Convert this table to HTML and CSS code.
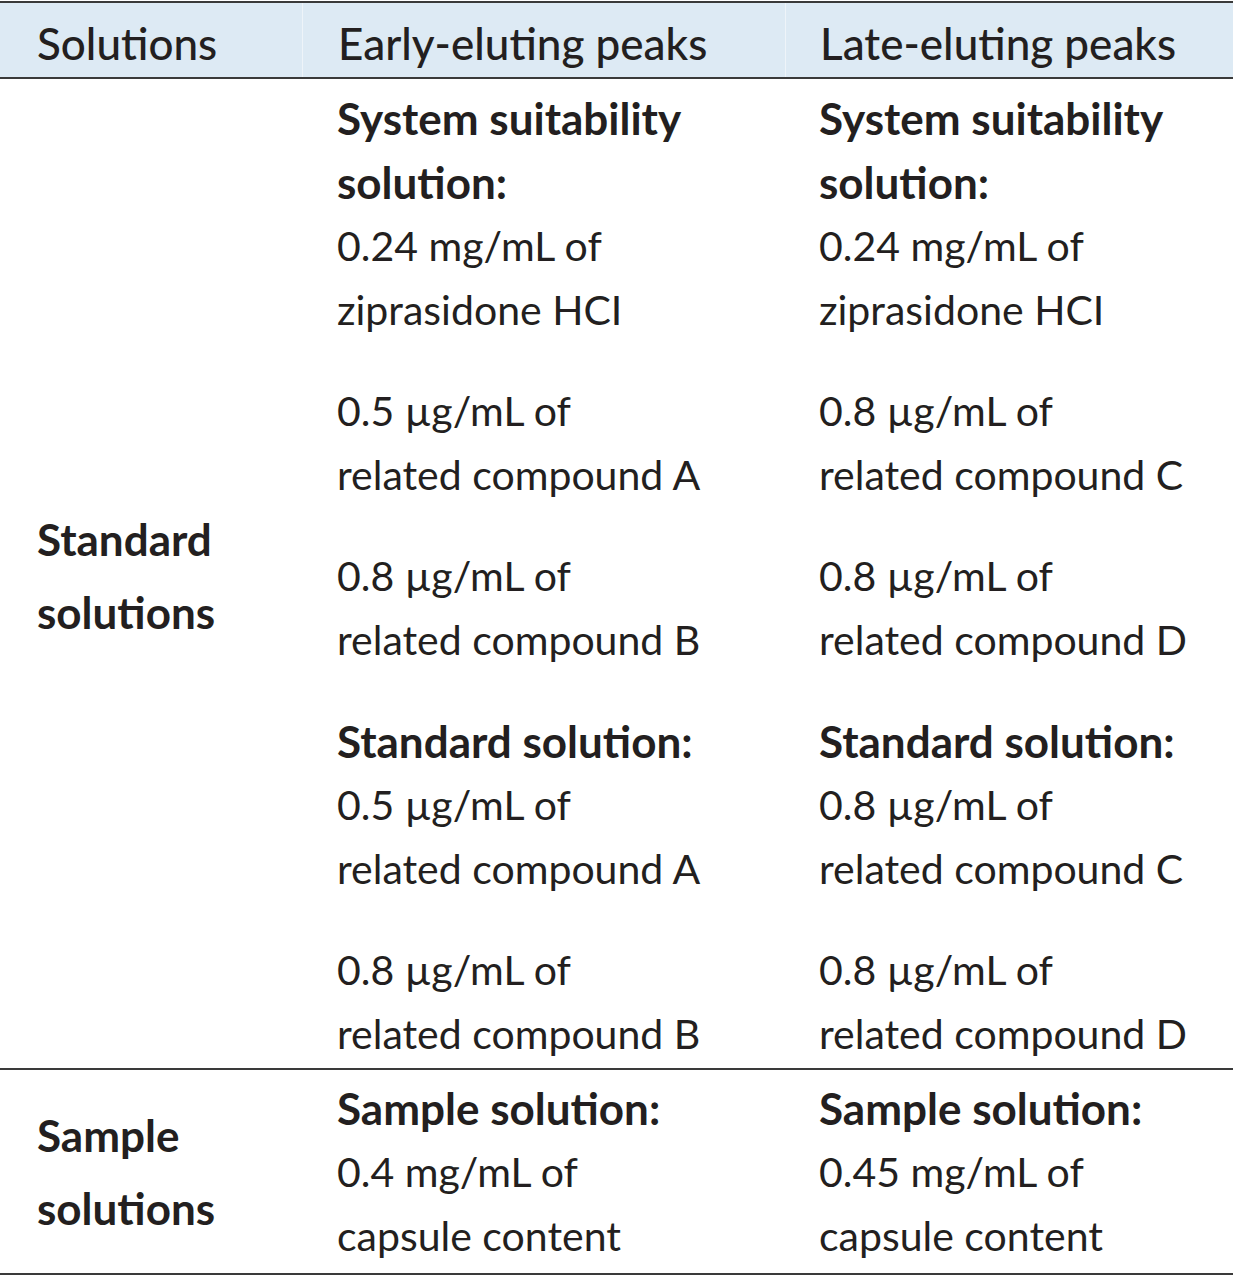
FILE: index.html
```html
<!DOCTYPE html>
<html>
<head>
<meta charset="utf-8">
<link rel="stylesheet" href="styles.css">
</head>
<body>
<div class="table">
  <div class="row head">
    <div class="cell c1">Solutions</div>
    <div class="cell c2">Early-eluting peaks</div>
    <div class="cell c3">Late-eluting peaks</div>
  </div>
  <div class="row body std">
    <div class="cell c1 label">Standard<br>solutions</div>
    <div class="cell c2">
      <p class="block"><b>System suitability<br>solution:</b>0.24 mg/mL of<br>ziprasidone HCI</p>
      <p class="block">0.5 µg/mL of<br>related compound A</p>
      <p class="block">0.8 µg/mL of<br>related compound B</p>
      <p class="block"><b>Standard solution:</b>0.5 µg/mL of<br>related compound A</p>
      <p class="block">0.8 µg/mL of<br>related compound B</p>
    </div>
    <div class="cell c3">
      <p class="block"><b>System suitability<br>solution:</b>0.24 mg/mL of<br>ziprasidone HCI</p>
      <p class="block">0.8 µg/mL of<br>related compound C</p>
      <p class="block">0.8 µg/mL of<br>related compound D</p>
      <p class="block"><b>Standard solution:</b>0.8 µg/mL of<br>related compound C</p>
      <p class="block">0.8 µg/mL of<br>related compound D</p>
    </div>
  </div>
  <div class="row body sample">
    <div class="cell c1 label">Sample<br>solutions</div>
    <div class="cell c2">
      <p class="block"><b>Sample solution:</b>0.4 mg/mL of<br>capsule content</p>
    </div>
    <div class="cell c3">
      <p class="block"><b>Sample solution:</b>0.45 mg/mL of<br>capsule content</p>
    </div>
  </div>
</div>
</body>
</html>
```

FILE: styles.css
```css
html, body {
  margin: 0;
  padding: 0;
  background: #ffffff;
}

body {
  font-family: "Lato", "Liberation Sans", sans-serif;
  color: #231f20;
}

.table {
  width: 1233px;
  margin-top: 1px;
  border-top: 2px solid #3a3a3a;
  border-bottom: 2px solid #3a3a3a;
}

.row {
  display: grid;
  grid-template-columns: 302px 483px 1fr;
}

.head {
  background: #ddeaf4;
  height: 74px;
  border-bottom: 2px solid #3a3a3a;
  font-size: 44px;
  font-weight: 500;
}

.head .cell {
  display: flex;
  align-items: center;
  padding-top: 6px;
}

.head .c2,
.head .c3 {
  border-left: 1px solid #eef4f9;
}

.c1 { padding-left: 37px; }
.c2 { padding-left: 35px; }
.c3 { padding-left: 34px; }

.body {
  font-size: 41px;
  line-height: 64px;
}

.std {
  padding: 7px 0 2px;
  border-bottom: 2px solid #3a3a3a;
}

.sample {
  padding: 6px 0 5px;
}

.label {
  display: flex;
  align-items: center;
  font-weight: 700;
  font-size: 44px;
  line-height: 73px;
}

.block {
  margin: 0 0 37px;
}

.block:last-child {
  margin-bottom: 0;
}

.block b {
  display: block;
  font-size: 44px;
  line-height: 64px;
  font-weight: 700;
}
```
